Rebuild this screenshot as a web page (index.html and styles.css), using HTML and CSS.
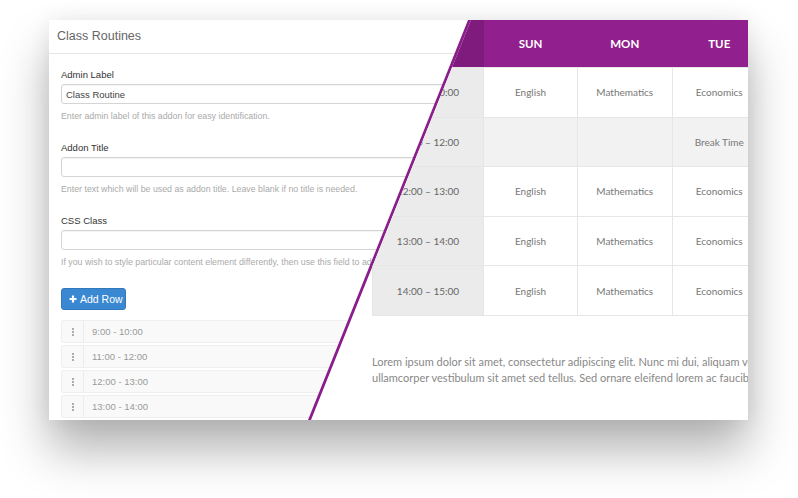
FILE: index.html
```html
<!DOCTYPE html>
<html lang="en">
<head>
    <meta charset="UTF-8">
    <meta name="viewport" content="width=device-width, initial-scale=1.0">
    <title>Class Routines</title>
    <link rel="stylesheet" href="styles.css">
</head>
<body>
    <div class="card">
        <!-- addon settings panel -->
        <div class="settings">
            <div class="settings-header">Class Routines</div>
            <div class="settings-body">
                <div class="field">
                    <label>Admin Label</label>
                    <input type="text" value="Class Routine">
                    <p class="help">Enter admin label of this addon for easy identification.</p>
                </div>
                <div class="field">
                    <label>Addon Title</label>
                    <input type="text">
                    <p class="help">Enter text which will be used as addon title. Leave blank if no title is needed.</p>
                </div>
                <div class="field">
                    <label>CSS Class</label>
                    <input type="text">
                    <p class="help">If you wish to style particular content element differently, then use this field to add a class name and then refer to it in your css file.</p>
                </div>

                <button type="button" class="btn-add">
                    <svg width="8" height="8" viewBox="0 0 8 8"><path d="M4 0.5v7M0.5 4h7" stroke="#fff" stroke-width="2.2"/></svg>
                    Add Row
                </button>

                <div class="rows">
                    <div class="row"><span class="handle"><svg width="2" height="8" viewBox="0 0 2 8"><circle cx="1" cy="1" r="0.9" fill="#888"/><circle cx="1" cy="4" r="0.9" fill="#888"/><circle cx="1" cy="7" r="0.9" fill="#888"/></svg></span><span class="row-title">9:00 - 10:00</span></div>
                    <div class="row"><span class="handle"><svg width="2" height="8" viewBox="0 0 2 8"><circle cx="1" cy="1" r="0.9" fill="#888"/><circle cx="1" cy="4" r="0.9" fill="#888"/><circle cx="1" cy="7" r="0.9" fill="#888"/></svg></span><span class="row-title">11:00 - 12:00</span></div>
                    <div class="row"><span class="handle"><svg width="2" height="8" viewBox="0 0 2 8"><circle cx="1" cy="1" r="0.9" fill="#888"/><circle cx="1" cy="4" r="0.9" fill="#888"/><circle cx="1" cy="7" r="0.9" fill="#888"/></svg></span><span class="row-title">12:00 - 13:00</span></div>
                    <div class="row"><span class="handle"><svg width="2" height="8" viewBox="0 0 2 8"><circle cx="1" cy="1" r="0.9" fill="#888"/><circle cx="1" cy="4" r="0.9" fill="#888"/><circle cx="1" cy="7" r="0.9" fill="#888"/></svg></span><span class="row-title">13:00 - 14:00</span></div>
                </div>
            </div>
        </div>

        <!-- frontend preview, cut on a slant over the settings -->
        <div class="preview">
            <div class="preview-inner">
                <table class="routine">
                    <thead>
                        <tr>
                            <th class="time"></th>
                            <th>SUN</th>
                            <th>MON</th>
                            <th>TUE</th>
                        </tr>
                    </thead>
                    <tbody>
                        <tr>
                            <td class="time">09:00 – 10:00</td>
                            <td>English</td>
                            <td>Mathematics</td>
                            <td>Economics</td>
                        </tr>
                        <tr class="break">
                            <td class="time">11:00 – 12:00</td>
                            <td></td>
                            <td></td>
                            <td>Break Time</td>
                        </tr>
                        <tr>
                            <td class="time">12:00 – 13:00</td>
                            <td>English</td>
                            <td>Mathematics</td>
                            <td>Economics</td>
                        </tr>
                        <tr>
                            <td class="time">13:00 – 14:00</td>
                            <td>English</td>
                            <td>Mathematics</td>
                            <td>Economics</td>
                        </tr>
                        <tr>
                            <td class="time">14:00 – 15:00</td>
                            <td>English</td>
                            <td>Mathematics</td>
                            <td>Economics</td>
                        </tr>
                    </tbody>
                </table>
                <p class="lorem">Lorem ipsum dolor sit amet, consectetur adipiscing elit. Nunc mi dui, aliquam vel ullamcorper vestibulum sit amet sed tellus. Sed ornare eleifend lorem ac faucibus.</p>
            </div>
        </div>
    </div>
</body>
</html>
```

FILE: styles.css
```css
html, body {
    height: 100%;
}
body {
    box-sizing: border-box;
    margin: 0;
    padding: 20px 0 0 49px;
    background: #fff;
    font-family: "Liberation Sans", Arial, sans-serif;
}
.card {
    position: relative;
    width: 699px;
    height: 400px;
    background: #fff;
    overflow: hidden;
    box-shadow: 0 30px 45px rgba(0, 0, 0, 0.3), 0 0 20px rgba(0, 0, 0, 0.07);
}

/* settings panel */
.settings-header {
    height: 33px;
    line-height: 33px;
    padding-left: 8px;
    font-size: 12.5px;
    color: #666;
    border-bottom: 1px solid #e6e6e6;
}
.settings-body {
    padding: 15px 0 0 12px;
}
.field {
    margin-bottom: 20px;
}
.field label {
    display: block;
    font-size: 9.5px;
    line-height: 12px;
    color: #333;
    margin-bottom: 3px;
}
.field input {
    display: block;
    box-sizing: border-box;
    width: 660px;
    height: 20px;
    padding: 0 4px;
    font-family: inherit;
    font-size: 9.5px;
    color: #444;
    border: 1px solid #d4d4d4;
    border-radius: 3px;
    box-shadow: inset 0 1px 1px rgba(0, 0, 0, 0.05);
}
.help {
    margin: 7px 0 0;
    font-size: 8.8px;
    line-height: 11px;
    color: #aaa;
    white-space: nowrap;
}
.btn-add {
    display: flex;
    align-items: center;
    gap: 3px;
    height: 22px;
    width: 65px;
    padding: 0 0 0 7px;
    font-family: inherit;
    font-size: 10.5px;
    color: #fff;
    background: #3b88d2;
    border: 1px solid #3178bd;
    border-radius: 3px;
}
.rows {
    margin-top: 10px;
}
.row {
    display: flex;
    align-items: center;
    box-sizing: border-box;
    width: 660px;
    height: 23px;
    margin-bottom: 2px;
    background: #f9f9f9;
    border: 1px solid #efefef;
    border-radius: 2px;
}
.handle {
    display: flex;
    align-items: center;
    justify-content: center;
    width: 21px;
    height: 100%;
    border-right: 1px solid #ececec;
}
.row-title {
    padding-left: 8px;
    font-size: 9.5px;
    color: #999;
}

/* preview panel */
.preview {
    position: absolute;
    inset: 0;
    background: #8b1c8c;
    clip-path: polygon(419px 0, 100% 0, 100% 100%, 259px 100%);
}
.preview-inner {
    height: 100%;
    padding-left: 323px;
    background: #fff;
    clip-path: polygon(422px 0, 100% 0, 100% 100%, 262px 100%);
    font-family: Lato, "Noto Sans", sans-serif;
}
.routine {
    width: 395px;
    table-layout: fixed;
    border-collapse: collapse;
}
.routine th {
    height: 47px;
    padding: 0;
    font-size: 11.5px;
    font-weight: 700;
    color: #fff;
    background: #911f8d;
    text-align: center;
}
.routine th.time {
    width: 111px;
    background: #7e1b7c;
}
.routine th:nth-child(2) {
    width: 94px;
}
.routine td {
    height: 48.6px;
    padding: 0;
    font-size: 10px;
    color: #777;
    text-align: center;
    border: 1px solid #e6e6e6;
}
.routine td.time {
    background: #ebebeb;
    color: #666;
}
.routine tr.break td {
    background: #f2f2f2;
}
.routine tr.break td.time {
    background: #ececec;
}
.lorem {
    width: 392px;
    margin: 38px 0 0;
    font-size: 11px;
    line-height: 16px;
    color: #888;
}
```
